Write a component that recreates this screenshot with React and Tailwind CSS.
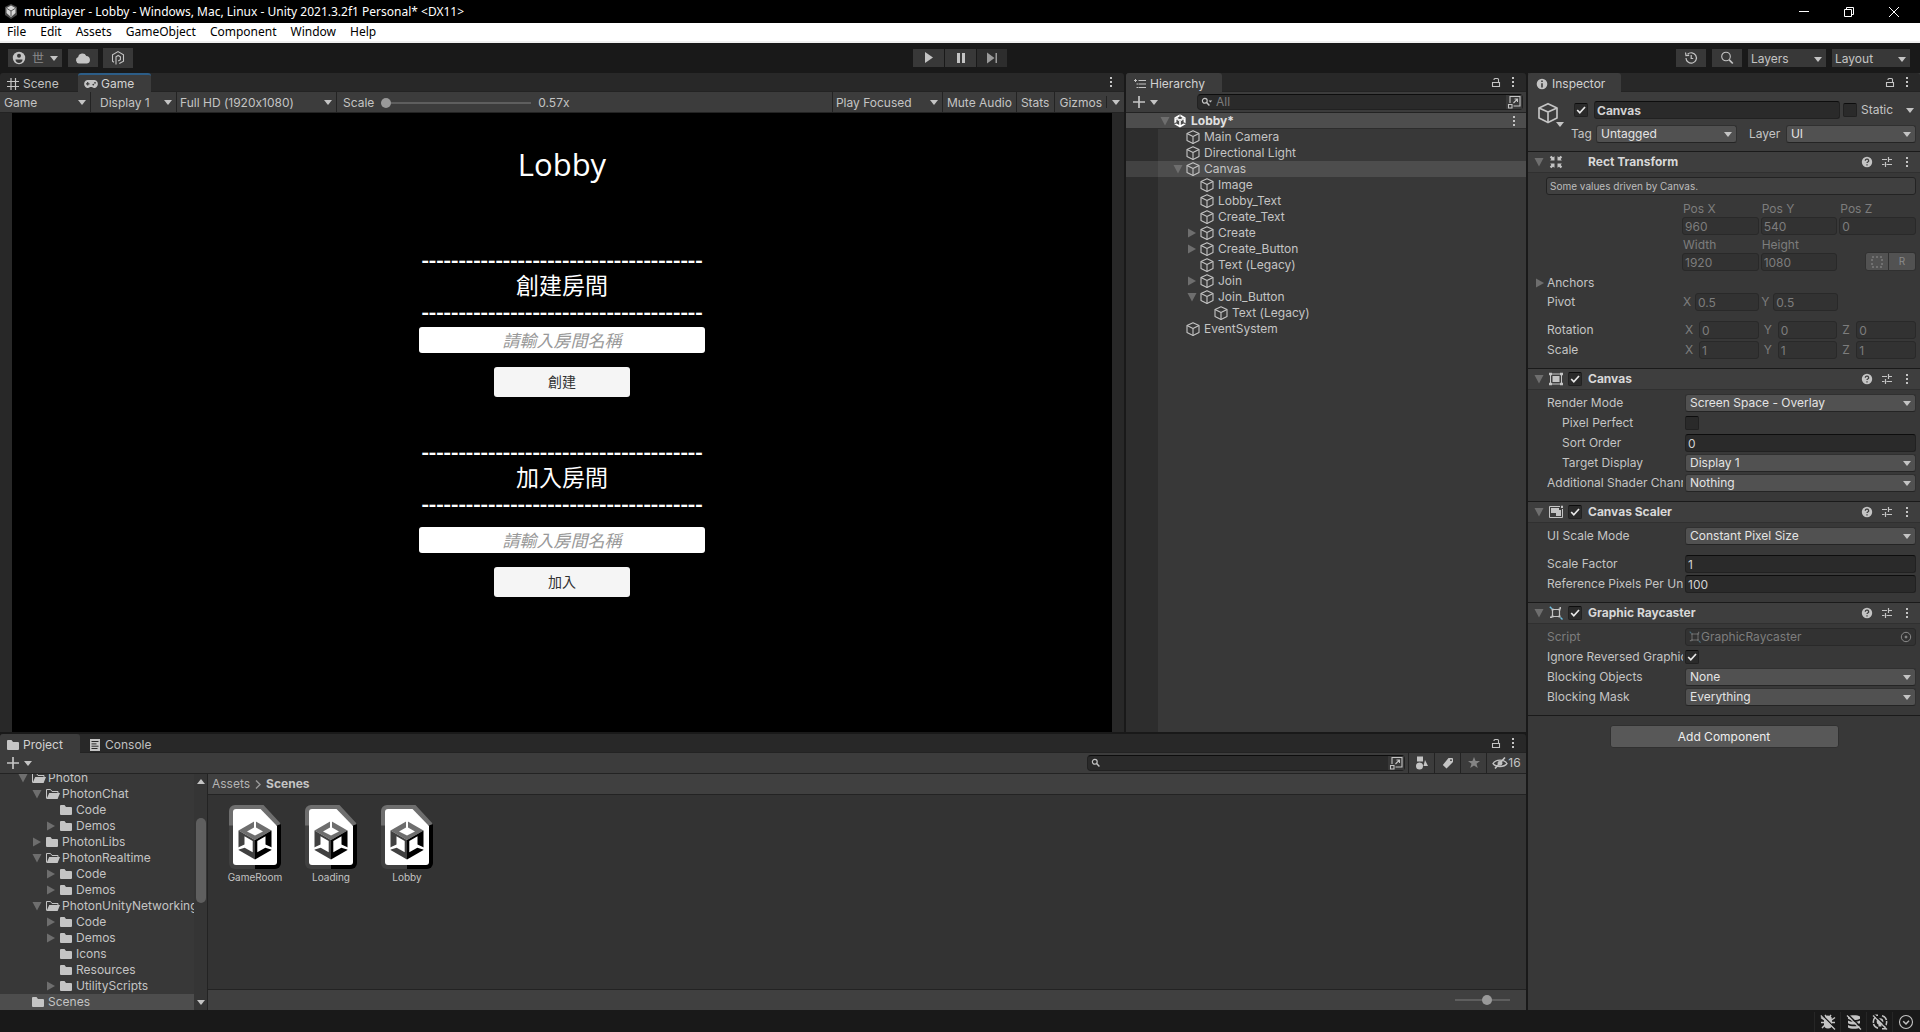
import React from "react";

/* ---------- icons ---------- */

function Caret({ className = "" }) {
  return (
    <svg viewBox="0 0 8 5" className={`h-[5px] w-2 shrink-0 fill-current ${className}`} aria-hidden="true">
      <path d="M0 0h8L4 5z" />
    </svg>
  );
}

function Fold({ open }) {
  return (
    <svg viewBox="0 0 10 10" className="size-2.5 shrink-0 fill-[#6e6e6e]" aria-hidden="true">
      {open ? <path d="M0.5 1h9L5 9.5z" /> : <path d="M1 .5v9L9 5z" />}
    </svg>
  );
}

function CubeIcon({ className = "size-4" }) {
  return (
    <svg viewBox="0 0 16 16" className={`${className} shrink-0 fill-none stroke-[#c4c4c4]`} strokeWidth="1.1" strokeLinejoin="round" aria-hidden="true">
      <path d="M8 1.8 14 4.6v6.800L8 14.400l-6-3V4.600z" />
      <path d="M2 4.600 8 7.400l6-2.800M8 7.400v7" />
    </svg>
  );
}

function UnityMark({ className, top, left, right, hole }) {
  return (
    <svg viewBox="9 15 34 41" className={className} aria-hidden="true">
      <UnityFaces top={top} left={left} right={right} hole={hole} />
    </svg>
  );
}

function UnityFaces({ top, left, right, hole }) {
  return (
    <g>
      <path fill={top} d="M26 16 42.5 25.5 26 35 9.5 25.5z" />
      <path fill={left} d="M9.5 25.5 26 35v19.5L9.5 45z" />
      <path fill={right} d="M42.5 25.5 26 35v19.5L42.5 45z" />
      <path fill={hole} d="M25 15h2v7.6l7 3.8-8 4.2-8-4.2 7-3.8z" />
      <path fill={hole} d="M15.5 31.2 23.7 36v11.2l-8-4.4-6.7 2v-2.4l6.5-3z" />
      <path fill={hole} d="M36.5 31.2 28.3 36v11.2l8-4.4 6.7 2v-2.4l-6.5-3z" />
    </g>
  );
}

function SceneAssetIcon() {
  return (
    <svg viewBox="0 0 52 64" className="h-16 w-[52px]" aria-hidden="true">
      <path fill="#404040" d="M0 18h26v46H6a6 6 0 0 1-6-6z" />
      <path fill="#000" d="M26 18h26v40a6 6 0 0 1-6 6H26z" />
      <path fill="#6e6e6e" d="M6 0h28.5L52 19l-4 1.5H0V6a6 6 0 0 1 6-6z" />
      <path fill="#fff" d="M7 4h24.5L48 21v36a3 3 0 0 1-3 3H7a3 3 0 0 1-3-3V7a3 3 0 0 1 3-3z" />
      <UnityFaces top="#6e6e6e" left="#404040" right="#000" hole="#fff" />
    </svg>
  );
}

function Dots() {
  return (
    <svg viewBox="0 0 4 12" className="h-3 w-1 fill-[#c4c4c4]" aria-hidden="true">
      <path d="M1 1h2v2H1zM1 5h2v2H1zM1 9h2v2H1z" />
    </svg>
  );
}

function Unlock() {
  return (
    <svg viewBox="0 0 10 11" className="h-[11px] w-2.5 fill-none stroke-[#c4c4c4]" aria-hidden="true">
      <path d="M1.5 5.5h7v4h-7zM3 3V2.5a1 1 0 0 1 1-1h2.5a1 1 0 0 1 1 1v3" strokeWidth="1.1" />
    </svg>
  );
}

function FolderIcon({ open }) {
  return open ? (
    <svg viewBox="0 0 14 12" className="h-3 w-3.5 shrink-0" aria-hidden="true">
      <path fill="none" stroke="#c4c4c4" d="M.5 10.5v-9h4l1.5 2h6v1.5" />
      <path fill="#c4c4c4" d="M3.2 5H14l-2.4 6H.6z" />
    </svg>
  ) : (
    <svg viewBox="0 0 14 12" className="h-3 w-3.5 shrink-0 fill-[#c4c4c4]" aria-hidden="true">
      <path d="M0 2a1 1 0 0 1 1-1h3.5L6 3h5a1 1 0 0 1 1 1v6a1 1 0 0 1-1 1H1a1 1 0 0 1-1-1z" />
    </svg>
  );
}

function Magnifier({ menu }) {
  return (
    <svg viewBox="0 0 12 10" className="h-2.5 w-3 shrink-0 fill-none stroke-[#c4c4c4]" aria-hidden="true">
      <circle cx="3.8" cy="3.8" r="2.4" strokeWidth="1.2" />
      <path d="m5.6 5.6 2.8 3" strokeWidth="1.4" />
      {menu && <path d="M7.6 3.6h3.6L9.4 5.6z" fill="#c4c4c4" stroke="none" />}
    </svg>
  );
}

function OpenWindow() {
  return (
    <svg viewBox="0 0 14 14" className="size-3.5 fill-none stroke-[#c4c4c4]" aria-hidden="true">
      <path d="M3 8V1.5h10v9.500H6.500M1.500 9.500h3.500v3.500H1.500zM6.500 8l4-4M7.500 4h3v3" strokeWidth="1.1" />
    </svg>
  );
}

function HelpIcon() {
  return (
    <svg viewBox="0 0 12 12" className="size-3" aria-hidden="true">
      <circle cx="6" cy="6" r="5.200" fill="#c4c4c4" />
      <path d="M4.300 4.800a1.700 1.500 0 1 1 2.500 1.200c-.6.300-.8.500-.8 1.100M6 8.200v1.200" fill="none" stroke="#3e3e3e" strokeWidth="1.300" />
    </svg>
  );
}

function PresetIcon() {
  return (
    <svg viewBox="0 0 12 12" className="size-3 fill-none stroke-[#c4c4c4]" aria-hidden="true">
      <path d="M1 3.500h5M8 3.500h3M7.500 1v5M1 8.500h2.500M5.500 8.500H11M4.500 6v5" strokeWidth="1.200" />
    </svg>
  );
}

function RectTransformIcon() {
  return (
    <svg viewBox="0 0 14 14" className="size-3.5 fill-[#c4c4c4]" aria-hidden="true">
      <path d="M.8 2.300 2.300.8l1.700 1.500L5.500 1.200v4.300H1.200L2.300 4zM13.200 2.300 11.700.8 10 2.300 8.500 1.200v4.300h4.300L11.700 4zM.8 11.700l1.500 1.500L4 11.700l1.500 1.100V8.500H1.200L2.300 10zM13.200 11.700l-1.500 1.500-1.700-1.500-1.500 1.100V8.500h4.300L11.700 10z" />
    </svg>
  );
}

function CanvasIcon() {
  return (
    <svg viewBox="0 0 14 14" className="size-3.5" aria-hidden="true">
      <path d="M1.500 2h11v10h-11z" fill="none" stroke="#c4c4c4" />
      <path d="M3.500 4h7v6h-7zM0 .8h3v2.400H0zM11 .8h3v2.400h-3zM0 10.800h3v2.400H0zM11 10.800h3v2.400h-3z" fill="#c4c4c4" />
    </svg>
  );
}

function ScalerIcon() {
  return (
    <svg viewBox="0 0 14 14" className="size-3.5" aria-hidden="true">
      <path d="M11 1.500H.5v11h13V4" fill="none" stroke="#c4c4c4" />
      <path d="M2 3h8v2h2v6H7V8H2zM12 .8h2V3h-2z" fill="#c4c4c4" />
    </svg>
  );
}

function RaycasterIcon({ className = "size-3.5" }) {
  return (
    <svg viewBox="0 0 14 14" className={className} aria-hidden="true">
      <path d="M3.500 3.500h7v7h-7z" fill="none" stroke="#c4c4c4" strokeWidth="1.200" />
      <path d="M2.500 2.500h2v2h-2zM9.500 2.500h2v2h-2zM2.500 9.500h2v2h-2zM9.500 9.500h2v2h-2zM10.500 1h1.500v2h-1.500zM1 10.500h2V12H1z" fill="#c4c4c4" />
      <path d="m.8.8 2 2M11.500 11.500l2 2" stroke="#6ec1e4" strokeWidth="1.400" />
    </svg>
  );
}

/* ---------- shared controls ---------- */

function IconButton({ label, children, className = "" }) {
  return (
    <button type="button" aria-label={label} className={`flex shrink-0 items-center justify-center ${className}`}>
      {children}
    </button>
  );
}

function Dropdown({ label, value, className = "", id }) {
  return (
    <div className={`relative h-[18px] rounded-[3px] border border-[#303030] border-b-[#242424] bg-[#515151] text-[#e4e4e4] ${className}`}>
      <select id={id} aria-label={label} defaultValue={value} className="block h-4 w-full appearance-none bg-transparent pr-4 pl-1 text-xs leading-4 outline-none">
        <option>{value}</option>
      </select>
      <Caret className="pointer-events-none absolute top-[6px] right-1 text-[#c4c4c4]" />
    </div>
  );
}

function ToolbarSelect({ label, value, className = "" }) {
  return (
    <div className={`relative h-full ${className}`}>
      <select aria-label={label} defaultValue={value} className="block h-full w-full appearance-none bg-transparent pt-0.5 pr-4 text-xs text-[#c4c4c4] outline-none">
        <option>{value}</option>
      </select>
      <Caret className="pointer-events-none absolute top-2 right-1 text-[#c4c4c4]" />
    </div>
  );
}

function Check({ label, checked, id }) {
  return (
    <span className="relative block size-3.5 shrink-0">
      <input
        id={id}
        type="checkbox"
        aria-label={label}
        defaultChecked={checked}
        className="peer block size-3.5 appearance-none rounded-[2px] border border-[#212121] border-t-[#0d0d0d] bg-[#2a2a2a]"
      />
      <svg viewBox="0 0 14 14" className="pointer-events-none absolute inset-0 hidden size-3.5 fill-none stroke-[#e8e8e8] peer-checked:block" aria-hidden="true">
        <path d="m3.200 7 2.600 2.800L11 4" strokeWidth="1.700" />
      </svg>
    </span>
  );
}

function Field({ label, value, disabled, className = "", id, bold }) {
  return (
    <input
      id={id}
      type="text"
      aria-label={label}
      defaultValue={value}
      disabled={disabled}
      className={`h-[18px] min-w-0 rounded-[3px] border px-0.5 text-xs outline-none ${
        disabled ? "border-[#292929] bg-[#323232] text-[#7d7d7d]" : "border-[#212121] border-t-[#0d0d0d] bg-[#2a2a2a] text-[#d2d2d2]"
      } ${bold ? "font-bold" : ""} ${className}`}
    />
  );
}

function Tab({ icon, children, active, focused, className = "" }) {
  return (
    <button
      type="button"
      role="tab"
      aria-selected={!!active}
      className={`flex h-full items-center rounded-t-[3px] text-xs ${active ? "bg-[#3c3c3c] text-[#d2d2d2]" : "border-b border-[#232323] pt-[3px] text-[#c0c0c0]"} ${
        focused ? "border-t-2 border-[#2c5d87]" : active ? "pt-0.5" : ""
      } ${className}`}
    >
      {icon}
      {children}
    </button>
  );
}

function TabBar({ children, lock }) {
  return (
    <div className="flex h-[19px] shrink-0 rounded-t-[3px] bg-[#282828]">
      <div role="tablist" className="flex">{children}</div>
      <div className="flex flex-1 items-center justify-end gap-2.5 border-b border-[#232323] pr-[11px]">
        {lock && <IconButton label="Lock"><Unlock /></IconButton>}
        <IconButton label="Window menu"><Dots /></IconButton>
      </div>
    </div>
  );
}

/* ---------- top chrome ---------- */

function TitleBar() {
  return (
    <header className="flex h-[23px] shrink-0 items-center bg-black pl-1 text-white">
      <svg viewBox="0 0 14 16" className="h-4 w-3.5" aria-hidden="true">
        <path fill="#4a4a4a" d="M7 0l6 3v8l-6 4-6-4V3z" />
        <path fill="#d8d8d8" d="M7 1.500l4.500 2.500v5L7 13 2.500 9V4z" />
        <path stroke="#555" fill="none" d="M3 4.500 7 7l4-2.500M7 7v5" />
      </svg>
      <h1 className="ml-1.5 font-['Noto_Sans',sans-serif] text-xs">mutiplayer - Lobby - Windows, Mac, Linux - Unity 2021.3.2f1 Personal* &lt;DX11&gt;</h1>
      <div className="ml-auto flex pr-1">
        <IconButton label="Minimize" className="h-[23px] w-[45px]">
          <svg viewBox="0 0 10 10" className="size-2.5 stroke-white"><path d="M0 4.500h10" /></svg>
        </IconButton>
        <IconButton label="Restore" className="h-[23px] w-[45px]">
          <svg viewBox="0 0 10 10" className="size-2.5 fill-none stroke-white"><path d="M.5 2.500h7v7h-7zM2.500 2.500v-2h7v7h-2" /></svg>
        </IconButton>
        <IconButton label="Close" className="h-[23px] w-[45px]">
          <svg viewBox="0 0 10 10" className="size-2.5 stroke-white"><path d="m0 0 10 10M10 0 0 10" /></svg>
        </IconButton>
      </div>
    </header>
  );
}

const MENUS = ["File", "Edit", "Assets", "GameObject", "Component", "Window", "Help"];

function MenuBar() {
  return (
    <nav className="flex h-5 shrink-0 items-center gap-3.5 border-b-2 border-[#f0f0f0] bg-white pl-[7px] font-['Noto_Sans',sans-serif] text-xs text-black">
      {MENUS.map((m) => (
        <button key={m} type="button">{m}</button>
      ))}
    </nav>
  );
}

function MainToolbar() {
  return (
    <div className="grid h-[30px] shrink-0 grid-cols-[1fr_auto_1fr] items-center bg-[#191919] px-2 text-xs text-[#c4c4c4]">
      <div className="flex items-center">
        <button type="button" aria-label="Account" className="flex h-[18px] w-[54px] items-center justify-between bg-[#383838] px-1">
          <svg viewBox="0 0 14 14" className="size-3.5" aria-hidden="true">
            <circle cx="7" cy="7" r="6.200" fill="#c4c4c4" />
            <circle cx="7" cy="4.800" r="2" fill="#383838" />
            <path d="M3.500 8.500h7c0 2.200-1.500 3.500-3.500 3.500s-3.500-1.300-3.500-3.500z" fill="#383838" />
          </svg>
          <span className="font-['Noto_Sans_CJK_TC',sans-serif] leading-4 text-[#8a8a8a]">世</span>
          <Caret />
        </button>
        <IconButton label="Services" className="ml-1.5 h-[18px] w-[30px] bg-[#383838]">
          <svg viewBox="0 0 16 12" className="h-3 w-4 fill-[#c4c4c4]"><path d="M4 11.500a3.300 3.300 0 0 1-.8-6.400A4.300 4.300 0 0 1 11.300 4 3.800 3.800 0 0 1 12 11.500z" /></svg>
        </IconButton>
        <IconButton label="Version control" className="ml-[5px] h-5 w-[30px] bg-[#383838]">
          <svg viewBox="0 0 14 16" className="h-4 w-3.5 fill-none stroke-[#c4c4c4]" strokeWidth="1.100">
            <path d="M3 12.300 1.500 11.200V4.700L7 1.600l5.500 3.100v6.500L8.300 13.600" />
            <path d="M5 14.500V6.800l2.200-1.300 2.200 1.300v2.900L7.200 11" />
          </svg>
        </IconButton>
      </div>
      <div className="flex gap-px">
        <IconButton label="Play" className="h-[18px] w-[31px] bg-[#383838]">
          <svg viewBox="0 0 10 12" className="h-3 w-2.5 fill-[#c4c4c4]"><path d="M1 0v11l8-5.500z" /></svg>
        </IconButton>
        <IconButton label="Pause" className="h-[18px] w-[31px] bg-[#383838]">
          <svg viewBox="0 0 10 12" className="h-3 w-2.5 fill-[#c4c4c4]"><path d="M1 1h3v10H1zM6 1h3v10H6z" /></svg>
        </IconButton>
        <IconButton label="Step" className="h-[18px] w-[30px] bg-[#2d2d2d]">
          <svg viewBox="0 0 12 12" className="size-3 fill-[#9a9a9a]"><path d="M1 .5v11L8.500 6zM9.500 1H11v10H9.500z" /></svg>
        </IconButton>
      </div>
      <div className="flex justify-end gap-1.5 pr-0.5">
        <IconButton label="History" className="h-[18px] w-[30px] bg-[#383838]">
          <svg viewBox="0 0 14 14" className="size-3.5 fill-none stroke-[#c4c4c4]" strokeWidth="1.200">
            <path d="M2 7a5.200 5.200 0 1 0 1.600-3.800M1.500 1.500l.5 3.200 3.200-.3M7.200 4v3.500h2" />
          </svg>
        </IconButton>
        <IconButton label="Search" className="h-[18px] w-[30px] bg-[#383838]">
          <svg viewBox="0 0 14 14" className="size-3.5 fill-none stroke-[#c4c4c4]">
            <circle cx="6" cy="5.500" r="4.300" strokeWidth="1.100" />
            <path d="m9.200 8.800 3.600 3.700" strokeWidth="1.700" />
          </svg>
        </IconButton>
        <ToolbarSelect label="Layers" value="Layers" className="h-[18px] w-[78px] bg-[#383838] pl-[3px]" />
        <ToolbarSelect label="Layout" value="Layout" className="h-[18px] w-[78px] bg-[#383838] pl-[3px]" />
      </div>
    </div>
  );
}

/* ---------- game panel ---------- */

const DASHES = "-".repeat(38);

function RoomBlock({ title, action, inputGap }) {
  return (
    <section className="flex flex-col items-center">
      <div className="text-center font-['Open_Sans','Noto_Sans_CJK_TC',sans-serif] text-[23px] leading-[26px]">
        <p aria-hidden="true" className="font-semibold whitespace-nowrap">{DASHES}</p>
        <h3>{title}</h3>
        <p aria-hidden="true" className="font-semibold whitespace-nowrap">{DASHES}</p>
      </div>
      <input
        type="text"
        aria-label={title}
        placeholder="請輸入房間名稱"
        className={`${inputGap} h-[26px] w-[286px] rounded-[3px] bg-white pb-0.5 text-center font-['Noto_Sans_CJK_TC',sans-serif] text-[17px] text-[#323232] italic outline-none placeholder:text-[#999999]`}
      />
      <button type="button" className="mt-3.5 h-[30px] w-[136px] rounded-[3px] bg-[#f5f5f5] pb-0.5 font-['Noto_Sans_CJK_TC',sans-serif] text-sm text-[#323232]">
        {action}
      </button>
    </section>
  );
}

function GamePanel() {
  return (
    <section className="flex min-w-0 flex-1 flex-col" aria-label="Game">
      <TabBar>
        <Tab className="w-[78px] gap-1 pl-[7px]" icon={<svg viewBox="0 0 12 12" className="size-3 stroke-[#c4c4c4]"><path d="M4 0v12M8.500 0v12M0 3.500h12M0 8.500h12" strokeWidth="1.200" /></svg>}>Scene</Tab>
        <Tab
          active
          focused
          className="w-[73px] gap-[3px] pl-1.5"
          icon={
            <svg viewBox="0 0 14 10" className="h-2.5 w-3.5">
              <path fill="#c4c4c4" d="M3.500 1a3.500 4 0 1 0 2.500 7h2a3.500 4 0 1 0 2.500-7z" />
              <path stroke="#3c3c3c" d="M2 4.800h3.500M3.700 3v3.600" strokeWidth="1.200" />
              <circle cx="9.300" cy="5.600" r=".9" fill="#3c3c3c" /><circle cx="11" cy="3.800" r=".9" fill="#3c3c3c" />
            </svg>
          }
        >
          Game
        </Tab>
      </TabBar>
      <div className="flex h-[21px] shrink-0 items-stretch border-b border-[#232323] bg-[#3c3c3c] text-xs text-[#c4c4c4]">
        <ToolbarSelect label="View" value="Game" className="w-[91px] border-r border-[#232323] pl-1" />
        <ToolbarSelect label="Display" value="Display 1" className="w-[86px] border-r border-[#232323] pl-[9px]" />
        <ToolbarSelect label="Resolution" value="Full HD (1920x1080)" className="w-40 border-r border-[#232323] pl-[3px]" />
        <label className="flex items-center gap-[7px] pt-0.5 pl-1.5">
          Scale
          <input
            type="range"
            min="0"
            max="100"
            defaultValue="0"
            className="h-2.5 w-[150px] appearance-none bg-transparent [&::-webkit-slider-runnable-track]:h-0.5 [&::-webkit-slider-runnable-track]:bg-[#5e5e5e] [&::-webkit-slider-thumb]:-mt-1 [&::-webkit-slider-thumb]:size-2.5 [&::-webkit-slider-thumb]:appearance-none [&::-webkit-slider-thumb]:rounded-full [&::-webkit-slider-thumb]:bg-[#999999]"
          />
          <span>0.57x</span>
        </label>
        <div className="ml-auto flex">
          <ToolbarSelect label="Play mode" value="Play Focused" className="w-[111px] border-x border-[#232323] pl-[3px]" />
          <button type="button" className="border-r border-[#232323] px-1 pt-0.5">Mute Audio</button>
          <button type="button" className="border-r border-[#232323] pt-0.5 pr-[5px] pl-1">Stats</button>
          <button type="button" className="px-1 pt-0.5">Gizmos</button>
          <IconButton label="Gizmo options" className="my-1 w-[18px] border-l border-[#232323]"><Caret /></IconButton>
        </div>
      </div>
      <div className="flex-1 bg-[#282828] px-3">
        <div className="flex h-full flex-col items-center bg-black text-white">
          <h2 className="mt-7 font-['Open_Sans',sans-serif] text-[31px] leading-[46px]">Lobby</h2>
          <div className="mt-[59px]"><RoomBlock title="創建房間" action="創建" inputGap="mt-[3px]" /></div>
          <div className="mt-[41px]"><RoomBlock title="加入房間" action="加入" inputGap="mt-[11px]" /></div>
        </div>
      </div>
    </section>
  );
}

/* ---------- hierarchy ---------- */

const OBJECTS = [
  { name: "Main Camera", depth: 0 },
  { name: "Directional Light", depth: 0 },
  { name: "Canvas", depth: 0, fold: "open", selected: true },
  { name: "Image", depth: 1 },
  { name: "Lobby_Text", depth: 1 },
  { name: "Create_Text", depth: 1 },
  { name: "Create", depth: 1, fold: "closed" },
  { name: "Create_Button", depth: 1, fold: "closed" },
  { name: "Text (Legacy)", depth: 1 },
  { name: "Join", depth: 1, fold: "closed" },
  { name: "Join_Button", depth: 1, fold: "open" },
  { name: "Text (Legacy)", depth: 2 },
  { name: "EventSystem", depth: 0 },
];

const INDENT = ["pl-[15px]", "pl-[29px]", "pl-[43px]"];

function HierarchyPanel() {
  return (
    <section className="flex w-[400px] shrink-0 flex-col" aria-label="Hierarchy">
      <TabBar lock>
        <Tab
          active
          className="w-24 gap-1 pl-2"
          icon={<svg viewBox="0 0 12 12" className="size-3 fill-none stroke-[#c4c4c4]"><path d="M0 2.500h3M1.500 1v3M4.500 2.500H12M4.500 6H12M4.500 9.500H12M2.500 6H4M2.500 9.500H4" /></svg>}
        >
          Hierarchy
        </Tab>
      </TabBar>
      <div className="flex h-[21px] shrink-0 items-center border-b border-[#232323] bg-[#3c3c3c] pr-[3px] pl-[7px]">
        <IconButton label="Create object" className="gap-[5px] text-[#c4c4c4]">
          <svg viewBox="0 0 12 12" className="size-3 stroke-[#c4c4c4]"><path d="M6 0v12M0 6h12" strokeWidth="1.700" /></svg>
          <Caret />
        </IconButton>
        <div className="ml-[39px] flex h-4 flex-1 items-center rounded-[4px] border border-[#212121] border-t-[#0d0d0d] bg-[#2a2a2a] pl-[3px]">
          <Magnifier menu />
          <input type="search" aria-label="Search hierarchy" placeholder="All" className="min-w-0 flex-1 pl-[3px] text-xs leading-3.5 text-[#c4c4c4] outline-none placeholder:text-[#7d7d7d]" />
          <IconButton label="Open in search window" className="h-3.5 w-4 bg-[#383838]"><OpenWindow /></IconButton>
        </div>
      </div>
      <div className="flex h-4 shrink-0 items-center border-b border-[#2c2c2c] bg-[#4d4d4d] pr-2.5 pl-[34px] text-[#e0e0e0]">
        <Fold open />
        <UnityMark className="ml-1 h-3.5 w-3" top="#fff" left="#fff" right="#fff" hole="#4d4d4d" />
        <span className="ml-[5px] flex-1 text-xs leading-4 font-bold">Lobby*</span>
        <IconButton label="Scene menu"><Dots /></IconButton>
      </div>
      <ul className="flex-1 bg-linear-to-r from-[#2d2d2d] from-[32px] to-[#383838] to-[32px] text-xs leading-4 text-[#c4c4c4]">
        {OBJECTS.map((o, i) => (
          <li key={i} className={`flex h-4 ${o.selected ? "bg-[#4d4d4d]" : ""}`}>
            <span className={`w-8 shrink-0 ${o.selected ? "bg-[#424242]" : ""}`} />
            <span className={`flex items-center ${INDENT[o.depth]}`}>
              <span className="flex w-3 shrink-0 items-center">{o.fold && <Fold open={o.fold === "open"} />}</span>
              <CubeIcon />
              <span className="ml-[3px]">{o.name}</span>
            </span>
          </li>
        ))}
      </ul>
    </section>
  );
}

/* ---------- project ---------- */

const FOLDERS = [
  ["Photon", 0, "open"],
  ["PhotonChat", 1, "open"],
  ["Code", 2, ""],
  ["Demos", 2, "closed"],
  ["PhotonLibs", 1, "closed"],
  ["PhotonRealtime", 1, "open"],
  ["Code", 2, "closed"],
  ["Demos", 2, "closed"],
  ["PhotonUnityNetworking", 1, "open"],
  ["Code", 2, "closed"],
  ["Demos", 2, "closed"],
  ["Icons", 2, ""],
  ["Resources", 2, ""],
  ["UtilityScripts", 2, "closed"],
  ["Scenes", 0, ""],
];

const TREE_INDENT = ["pl-[18px]", "pl-8", "pl-[46px]"];

function ProjectPanel() {
  return (
    <section className="flex h-[276px] shrink-0 flex-col" aria-label="Project">
      <TabBar lock>
        <Tab active className="w-20 gap-0.5 pl-[7px]" icon={<FolderIcon />}>Project</Tab>
        <Tab
          className="gap-1 pl-[9px]"
          icon={<svg viewBox="0 0 12 12" className="size-3"><path fill="#c4c4c4" d="M1 0h10v12H1z" /><path stroke="#282828" d="M2.500 2.500h7M2.500 4.900h5M2.500 7.200h7M2.500 9.500h6" /></svg>}
        >
          Console
        </Tab>
      </TabBar>
      <div className="flex h-[21px] shrink-0 items-stretch border-b border-[#232323] bg-[#3c3c3c] pl-[7px] text-xs text-[#c4c4c4]">
        <IconButton label="Create asset" className="gap-[5px]">
          <svg viewBox="0 0 12 12" className="size-3 stroke-[#c4c4c4]"><path d="M6 0v12M0 6h12" strokeWidth="1.700" /></svg>
          <Caret />
        </IconButton>
        <div className="my-0.5 mr-[3px] ml-auto flex w-[318px] items-center rounded-[4px] border border-[#212121] border-t-[#0d0d0d] bg-[#2a2a2a] pl-[3px]">
          <Magnifier />
          <input type="search" aria-label="Search project" className="min-w-0 flex-1 text-xs leading-3.5 outline-none" />
          <IconButton label="Open in search window" className="h-3.5 w-4 bg-[#383838]"><OpenWindow /></IconButton>
        </div>
        <IconButton label="Filter by type" className="w-[26px] border-l border-[#232323]">
          <svg viewBox="0 0 14 14" className="size-3.5 fill-[#c4c4c4]"><path d="M2 .5h6v5H2zM10 4l3 6H8.500z" /><circle cx="4.500" cy="10" r="3.500" /></svg>
        </IconButton>
        <IconButton label="Filter by label" className="w-[26px] border-l border-[#232323]">
          <svg viewBox="0 0 12 12" className="size-3 fill-[#c4c4c4]"><path fillRule="evenodd" d="M6.500 1H10a1 1 0 0 1 1 1v3L4.500 11.500.8 8zM9 2.300a.9.900 0 1 0 0 1.800.9.900 0 0 0 0-1.800z" /></svg>
        </IconButton>
        <IconButton label="Favorites" className="w-[26px] border-l border-[#232323]">
          <svg viewBox="0 0 12 12" className="size-3 fill-[#858585]"><path d="m6 0 1.600 4H12L8.500 6.800 9.800 11 6 8.500 2.200 11l1.300-4.200L0 4h4.400z" /></svg>
        </IconButton>
        <button type="button" aria-label="16 hidden packages" className="flex w-10 items-center justify-center border-l border-[#232323]">
          <svg viewBox="0 0 16 12" className="h-3 w-4 fill-none stroke-[#c4c4c4]"><path d="M1 6.500C4 2 12 2 15 6.500 12 10.500 4 10.500 1 6.500z" strokeWidth="1.300" /><circle cx="8" cy="6.200" r="2" fill="#c4c4c4" /><path d="M13 .5 3 11.500" strokeWidth="1.600" /></svg>
          16
        </button>
      </div>
      <div className="flex min-h-0 flex-1">
        <ul className="flex w-[194px] shrink-0 flex-col justify-end overflow-hidden bg-[#383838] text-xs leading-4 text-[#c4c4c4]">
          {FOLDERS.map(([name, depth, fold], i) => (
            <li key={i} className={`flex h-4 shrink-0 items-center whitespace-nowrap ${TREE_INDENT[depth]} ${name === "Scenes" ? "bg-[#4d4d4d]" : ""}`}>
              <span className="flex w-3.5 shrink-0 items-center">{fold && <Fold open={fold === "open"} />}</span>
              <FolderIcon open={fold === "open"} />
              <span className="ml-0.5">{name}</span>
            </li>
          ))}
        </ul>
        <div className="flex w-3.5 shrink-0 flex-col items-center border-r border-[#232323] bg-[#353535] py-[5px] text-[#c4c4c4]" aria-hidden="true">
          <Caret className="rotate-180" />
          <div className="mt-[34px] h-[85px] w-2.5 rounded-full bg-[#5f5f5f]" />
          <Caret className="mt-auto" />
        </div>
        <div className="flex min-w-0 flex-1 flex-col bg-[#333333]">
          <nav className="flex h-[21px] shrink-0 items-center gap-[5px] border-b border-[#232323] bg-[#404040] pl-1 text-xs text-[#b4b4b4]">
            <a href="#assets">Assets</a>
            <svg viewBox="0 0 6 9" className="h-[9px] w-1.5 fill-none stroke-[#999]"><path d="m1 .5 4 4-4 4" strokeWidth="1.400" /></svg>
            <a href="#scenes" className="font-bold text-[#c4c4c4]">Scenes</a>
          </nav>
          <ul className="flex flex-1 pt-2.5 pl-[9px] text-[10px] leading-4 text-[#c4c4c4]">
            {["GameRoom", "Loading", "Lobby"].map((n) => (
              <li key={n} className="flex w-[76px] flex-col items-center"><SceneAssetIcon />{n}</li>
            ))}
          </ul>
          <footer className="flex h-[21px] shrink-0 items-center justify-end border-t border-[#232323] bg-[#404040] pr-4">
            <input
              type="range"
              min="0"
              max="100"
              defaultValue="60"
              aria-label="Icon size"
              className="h-2.5 w-[55px] appearance-none bg-transparent [&::-webkit-slider-runnable-track]:h-0.5 [&::-webkit-slider-runnable-track]:bg-[#5e5e5e] [&::-webkit-slider-thumb]:-mt-1 [&::-webkit-slider-thumb]:size-2.5 [&::-webkit-slider-thumb]:appearance-none [&::-webkit-slider-thumb]:rounded-full [&::-webkit-slider-thumb]:bg-[#999999]"
            />
          </footer>
        </div>
      </div>
    </section>
  );
}

/* ---------- inspector ---------- */

function Row({ label, indent, dim, htmlFor, children }) {
  return (
    <div className="flex h-[18px] items-center">
      <label htmlFor={htmlFor} className={`w-[138px] shrink-0 whitespace-nowrap ${indent ? "pl-[15px]" : ""} ${dim ? "text-[#7d7d7d]" : ""}`}>
        <span className="mr-0.5 block overflow-hidden">{label}</span>
      </label>
      {children}
    </div>
  );
}

function Component({ title, icon, toggle, children }) {
  return (
    <section className="border-t border-[#1a1a1a]">
      <header className="flex h-[21px] items-center border-b border-[#303030] bg-[#3e3e3e] pr-[7px] pl-1.5">
        <Fold open />
        <span className="ml-[5px] flex size-3.5 items-center justify-center">{icon}</span>
        <span className="ml-[5px] w-5">{toggle && <Check label={`Enable ${title}`} checked />}</span>
        <h3 className="flex-1 font-bold text-[#d8d8d8]">{title}</h3>
        <div className="flex items-center gap-2">
          <IconButton label="Help"><HelpIcon /></IconButton>
          <IconButton label="Presets"><PresetIcon /></IconButton>
          <IconButton label="Component menu" className="w-3"><Dots /></IconButton>
        </div>
      </header>
      <div className="flex flex-col gap-0.5 pt-1 pr-1 pb-[9px] pl-[19px]">{children}</div>
    </section>
  );
}

function Vector({ group, items }) {
  return (
    <div className="flex flex-1 gap-[5px] text-[#7d7d7d]">
      {items.map(([axis, v]) => (
        <label key={axis} className="flex flex-1 items-center">
          <span className="w-3.5 shrink-0">{axis}</span>
          <Field disabled label={`${group} ${axis}`} value={v} className="w-full" />
        </label>
      ))}
    </div>
  );
}

function PosField({ label, value }) {
  return (
    <label className="block">
      <span className="block pt-px pl-px leading-[17px]">{label}</span>
      <Field disabled value={value} className="block w-full" />
    </label>
  );
}

function InspectorPanel() {
  return (
    <aside className="flex w-[392px] shrink-0 flex-col bg-[#383838]" aria-label="Inspector">
      <TabBar lock>
        <Tab
          active
          className="w-[93px] gap-1 pl-2"
          icon={<svg viewBox="0 0 12 12" className="size-3"><circle cx="6" cy="6" r="5.300" fill="#c4c4c4" /><path stroke="#3c3c3c" strokeWidth="1.600" d="M6 2.500v1.500M6 5.200v4.300" /></svg>}
        >
          Inspector
        </Tab>
      </TabBar>
      <div className="flex flex-col text-xs text-[#c4c4c4]">
        <div className="flex bg-[#3c3c3c] pt-[9px] pr-1 pb-2 pl-1.5">
          <IconButton label="Object icon" className="w-[31px] items-start">
            <CubeIcon className="size-6" />
            <Caret className="mt-[21px] -ml-1" />
          </IconButton>
          <div className="min-w-0 flex-1 space-y-1.5">
            <div className="flex items-center pl-[9px]">
              <Check label="Active" checked />
              <Field label="Object name" value="Canvas" bold className="mr-[3px] ml-1.5 flex-1" />
              <Check label="Static" id="static" />
              <label htmlFor="static" className="ml-1 w-[45px]">Static</label>
              <Caret className="mr-0.5" />
            </div>
            <div className="flex items-center pl-1.5">
              <label htmlFor="tag" className="w-[25px]">Tag</label>
              <Dropdown id="tag" label="Tag" value="Untagged" className="flex-[141]" />
              <label htmlFor="layer" className="ml-3 w-[37px]">Layer</label>
              <Dropdown id="layer" label="Layer" value="UI" className="flex-[130]" />
            </div>
          </div>
        </div>

        <Component title="Rect Transform" icon={<RectTransformIcon />}>
          <p className="-ml-px h-[18px] rounded-[3px] border border-[#232323] bg-[#404040] pl-[3px] text-[10px] leading-4 text-[#bdbdbd]">Some values driven by Canvas.</p>
          <div className="mt-0.5 grid grid-cols-3 gap-x-0.5 pl-[135px] text-[#7d7d7d]">
            <PosField label="Pos X" value="960" />
            <PosField label="Pos Y" value="540" />
            <PosField label="Pos Z" value="0" />
            <PosField label="Width" value="1920" />
            <PosField label="Height" value="1080" />
            <div className="flex items-end justify-end text-[#8a8a8a]">
              <IconButton label="Blueprint mode" className="h-[19px] w-6 rounded-l-[3px] border border-[#303030] bg-[#525252]">
                <svg viewBox="0 0 12 12" className="size-3 fill-none stroke-[#8f8f8f]"><path d="M1 1h10v10H1z" strokeDasharray="2 2" /></svg>
              </IconButton>
              <button type="button" className="h-[19px] w-[27px] rounded-r-[3px] border border-l-0 border-[#303030] bg-[#525252] text-[10px]">R</button>
            </div>
          </div>
          <button type="button" className="-ml-3 flex h-[18px] items-center gap-0.5 pt-0.5 text-left"><Fold />Anchors</button>
          <div className="flex h-[18px] items-center">
            <span className="w-[136px]">Pivot</span>
            <div className="grid flex-1 grid-cols-3 gap-x-0.5 text-[#7d7d7d]">
              <label className="flex items-center"><span className="w-3 shrink-0">X</span><Field disabled value="0.5" className="w-full" /></label>
              <label className="flex items-center"><span className="w-3 shrink-0">Y</span><Field disabled value="0.5" className="w-full" /></label>
            </div>
          </div>
          <div className="mt-2"><Row label="Rotation"><Vector group="Rotation" items={[["X", "0"], ["Y", "0"], ["Z", "0"]]} /></Row></div>
          <Row label="Scale"><Vector group="Scale" items={[["X", "1"], ["Y", "1"], ["Z", "1"]]} /></Row>
        </Component>

        <Component title="Canvas" icon={<CanvasIcon />} toggle>
          <Row label="Render Mode" htmlFor="rm"><Dropdown id="rm" value="Screen Space - Overlay" className="flex-1" /></Row>
          <Row label="Pixel Perfect" indent htmlFor="pp"><Check id="pp" /></Row>
          <Row label="Sort Order" indent htmlFor="so"><Field id="so" value="0" className="flex-1" /></Row>
          <Row label="Target Display" indent htmlFor="td"><Dropdown id="td" value="Display 1" className="flex-1" /></Row>
          <Row label="Additional Shader Channels" htmlFor="asc"><Dropdown id="asc" value="Nothing" className="flex-1" /></Row>
        </Component>

        <Component title="Canvas Scaler" icon={<ScalerIcon />} toggle>
          <Row label="UI Scale Mode" htmlFor="usm"><Dropdown id="usm" value="Constant Pixel Size" className="flex-1" /></Row>
          <div className="mt-2"><Row label="Scale Factor" htmlFor="sf"><Field id="sf" value="1" className="flex-1" /></Row></div>
          <Row label="Reference Pixels Per Unit" htmlFor="rp"><Field id="rp" value="100" className="flex-1" /></Row>
        </Component>

        <Component title="Graphic Raycaster" icon={<RaycasterIcon />} toggle>
          <Row label="Script" dim>
            <button type="button" disabled className="flex h-[18px] flex-1 items-center rounded-[3px] border border-[#292929] bg-[#323232] pr-[3px] pl-[3px] text-[#7d7d7d]">
              <RaycasterIcon className="size-3 opacity-40" />
              <span className="flex-1 text-left">GraphicRaycaster</span>
              <svg viewBox="0 0 12 12" className="size-3 fill-none stroke-[#8a8a8a]" aria-hidden="true"><circle cx="6" cy="6" r="4.700" /><circle cx="6" cy="6" r="1" fill="#8a8a8a" /></svg>
            </button>
          </Row>
          <Row label="Ignore Reversed Graphics" htmlFor="irg"><Check id="irg" checked /></Row>
          <Row label="Blocking Objects" htmlFor="bo"><Dropdown id="bo" value="None" className="flex-1" /></Row>
          <Row label="Blocking Mask" htmlFor="bm"><Dropdown id="bm" value="Everything" className="flex-1" /></Row>
        </Component>

        <div className="flex justify-center border-t border-[#1a1a1a] pt-[9px]">
          <button type="button" className="h-[23px] w-[229px] rounded-[3px] border border-[#303030] bg-[#585858] text-[#eeeeee]">Add Component</button>
        </div>
      </div>
    </aside>
  );
}

/* ---------- status bar ---------- */

function StatusBar() {
  const cell = "h-5 w-[26px] border-l border-[#262626]";
  return (
    <footer className="flex h-[22px] shrink-0 items-end justify-end bg-[#191919] pr-0.5">
      <IconButton label="Debugger" className={cell}>
        <svg viewBox="0 0 16 16" className="size-4" aria-hidden="true">
          <path fill="#c4c4c4" d="M4 5.500a4 4 0 0 1 8 0v5a4 4 0 0 1-8 0z" />
          <path stroke="#c4c4c4" strokeWidth="1.500" fill="none" d="M1 3.500 4.500 6M1 8.500h4M2 14l3-3M15 3.500 11.500 6M15 8.500h-4M14 14l-3-3M5 1l1.500 2M11 1 9.500 3" />
          <path stroke="#191919" strokeWidth="1.500" d="M1.500.5 16 15" />
          <path stroke="#c4c4c4" strokeWidth="1.200" d="M.8 1.500 15 15.500" />
        </svg>
      </IconButton>
      <IconButton label="Cache server" className={cell}>
        <svg viewBox="0 0 16 16" className="size-4" aria-hidden="true">
          <path fill="#c4c4c4" d="M2 2.500C4 .8 12 .8 14 2.500v2.300C12 6.500 4 6.500 2 4.800zM2 6.500c2 1.700 10 1.700 12 0v2.800c-2 1.700-10 1.700-12 0zM2 11c2 1.700 10 1.700 12 0v2.500c-2 1.700-10 1.700-12 0z" />
          <path stroke="#191919" strokeWidth="1.500" d="M2 .5 16 14" />
          <path stroke="#c4c4c4" strokeWidth="1.200" d="M1 1.500 15 15.500" />
        </svg>
      </IconButton>
      <IconButton label="Auto refresh" className={cell}>
        <svg viewBox="0 0 16 16" className="size-4" aria-hidden="true">
          <path stroke="#c4c4c4" strokeWidth="1.500" fill="none" d="M6 1.200H2M1.500 9A6.500 6.500 0 0 1 3.500 3M14.500 7a6.500 6.500 0 0 1-2 6M10 14.800h4M10 1.800A6.500 6.500 0 0 1 14.500 6M6 14.200A6.500 6.500 0 0 1 1.500 10" />
          <circle cx="8" cy="7.500" r="3.300" fill="#c4c4c4" />
          <path fill="#c4c4c4" d="M6.500 10h3v2.500h-3z" />
          <path stroke="#191919" strokeWidth="1.500" d="M2 .5 16 14" />
          <path stroke="#c4c4c4" strokeWidth="1.200" d="M1 1.500 15 15.500" />
        </svg>
      </IconButton>
      <IconButton label="Background tasks" className={cell}>
        <svg viewBox="0 0 16 16" className="size-4 fill-none stroke-[#c4c4c4]" aria-hidden="true">
          <circle cx="8" cy="8" r="6.500" strokeWidth="1.100" />
          <path d="M5.200 7.300 8 10l3-3.300" strokeWidth="1.500" />
        </svg>
      </IconButton>
    </footer>
  );
}

export default function App() {
  return (
    <div className="flex h-screen flex-col overflow-hidden bg-[#191919] font-['Inter',sans-serif] [font-feature-settings:'calt'_0] [&_input]:[font-feature-settings:'calt'_0] [&_select]:[font-feature-settings:'calt'_0]">
      <TitleBar />
      <MenuBar />
      <MainToolbar />
      <main className="flex min-h-0 flex-1 gap-0.5">
        <div className="flex min-w-0 flex-1 flex-col gap-0.5">
          <div className="flex min-h-0 flex-1 gap-0.5">
            <GamePanel />
            <HierarchyPanel />
          </div>
          <ProjectPanel />
        </div>
        <InspectorPanel />
      </main>
      <StatusBar />
    </div>
  );
}
